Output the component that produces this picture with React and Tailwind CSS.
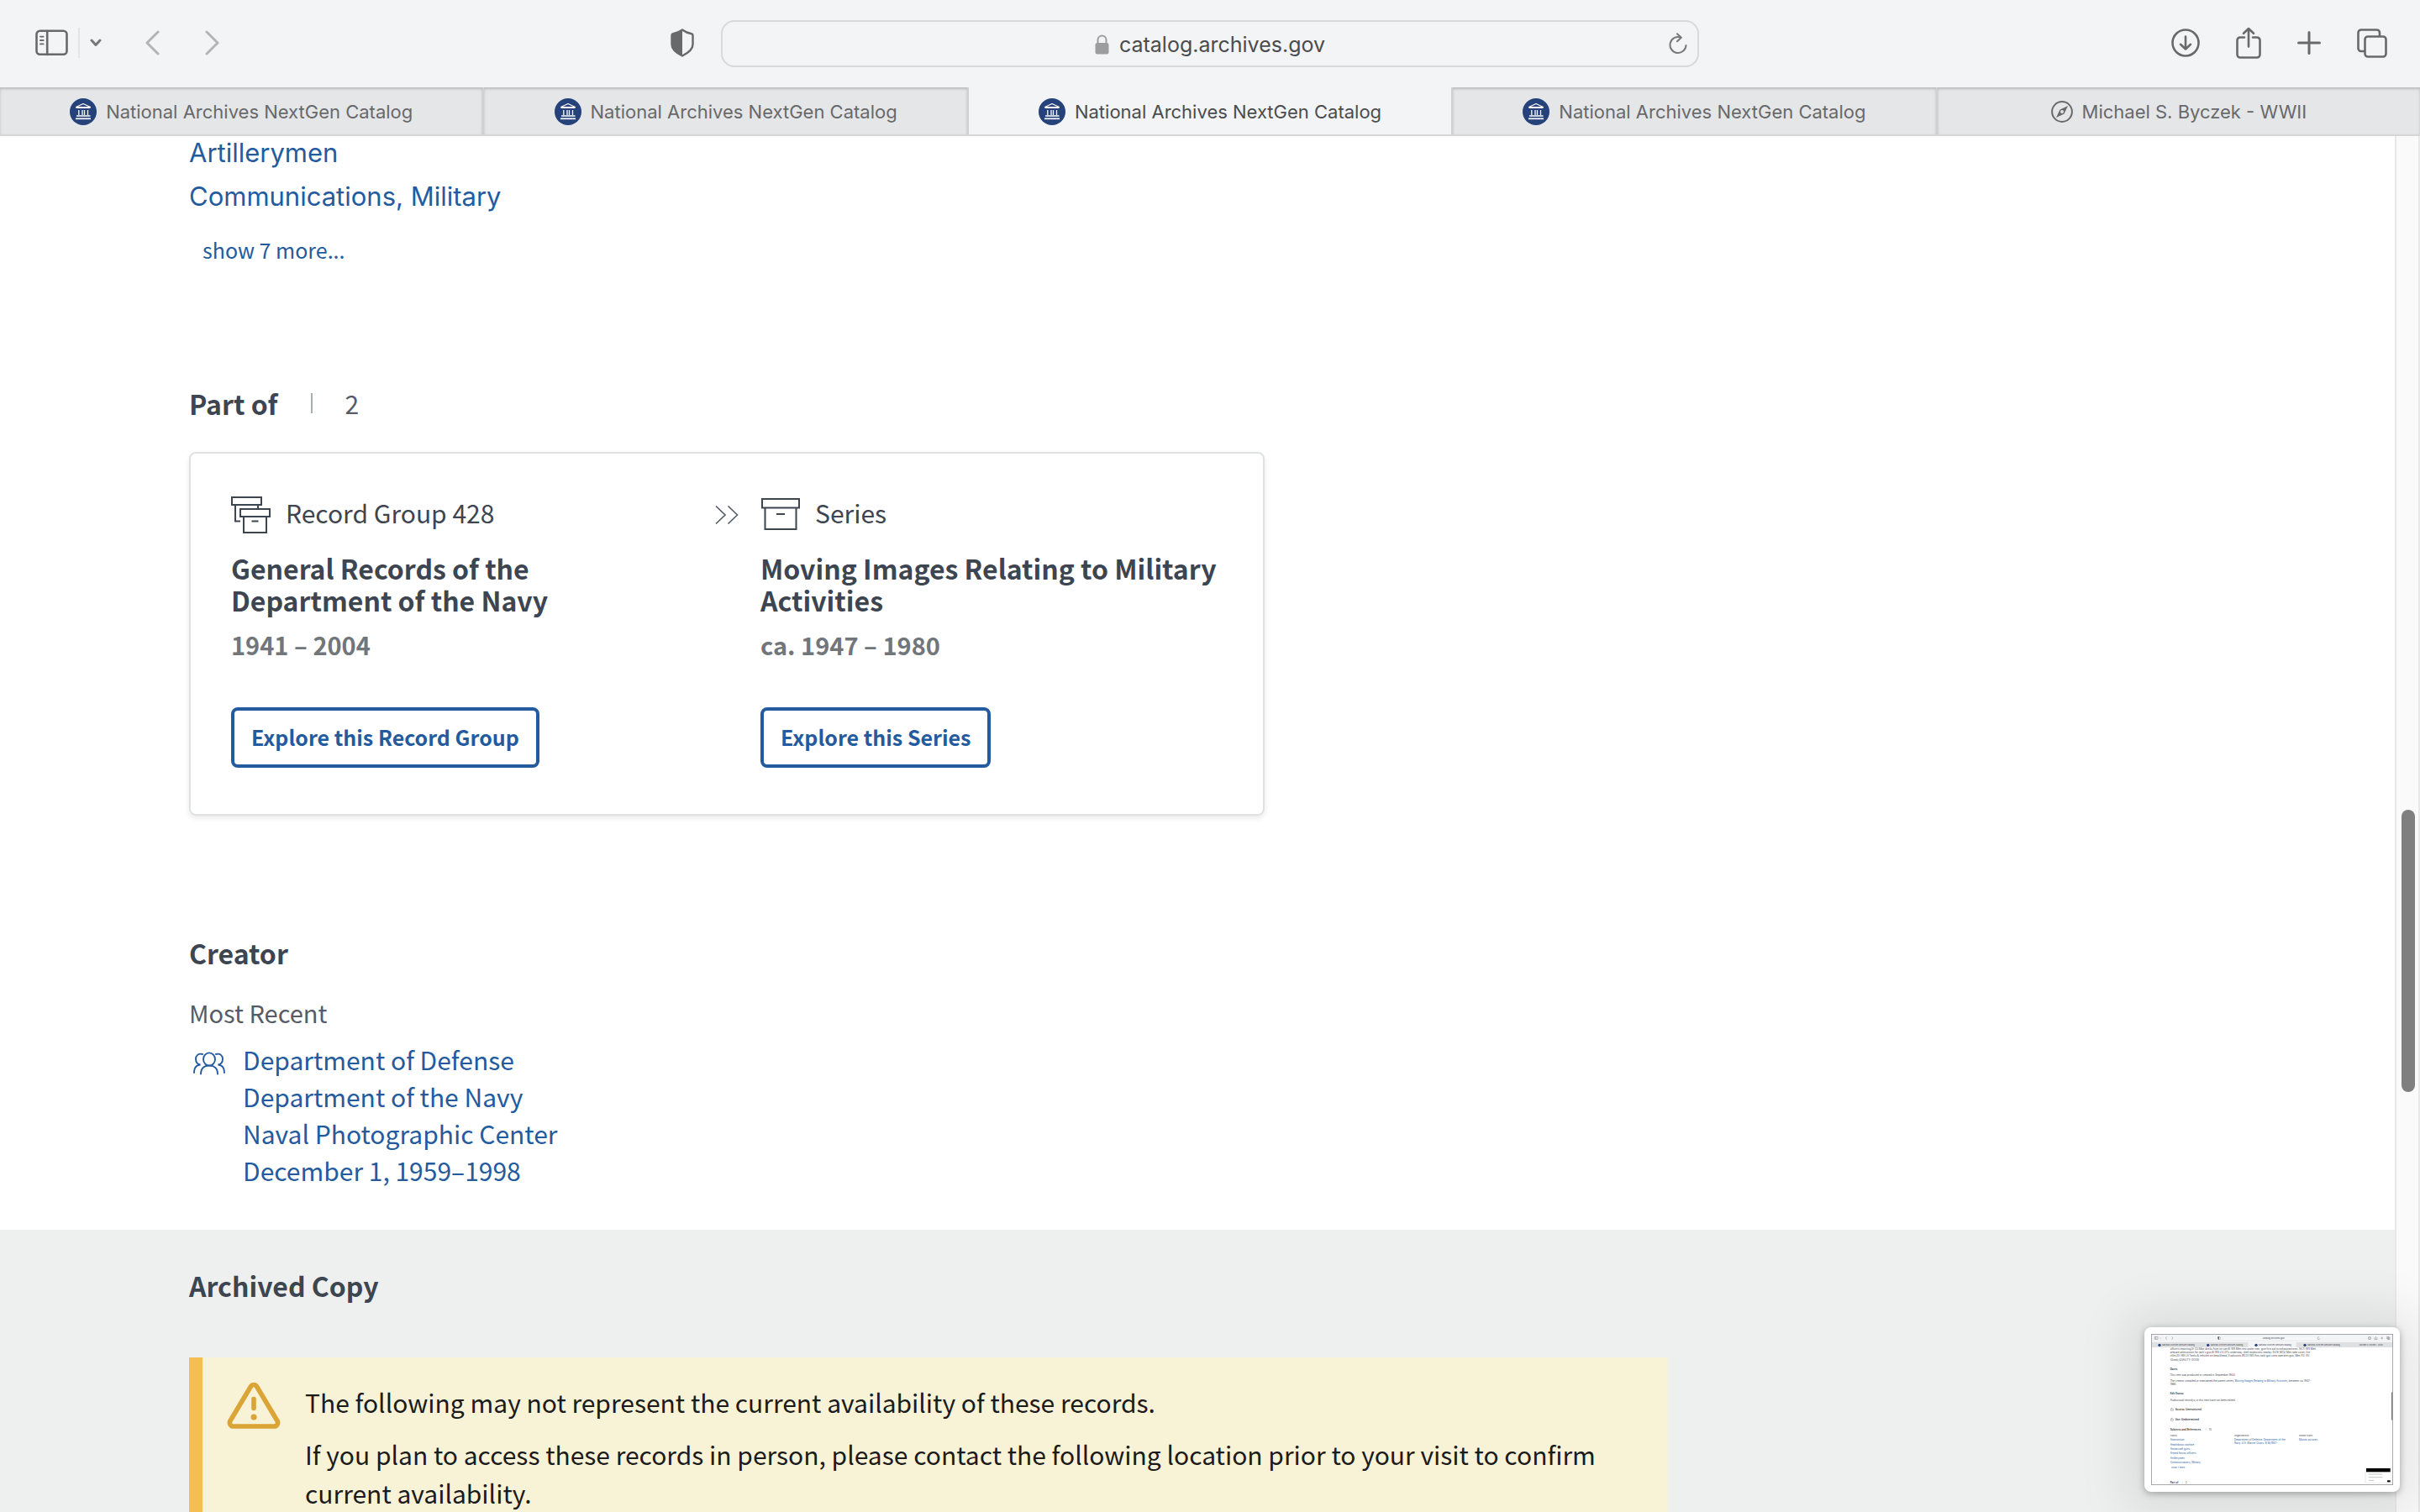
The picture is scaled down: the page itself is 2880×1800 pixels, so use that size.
import React from 'react';

const tabs = [
  { title: 'National Archives NextGen Catalog', icon: 'archives' },
  { title: 'National Archives NextGen Catalog', icon: 'archives' },
  { title: 'National Archives NextGen Catalog', icon: 'archives', active: true },
  { title: 'National Archives NextGen Catalog', icon: 'archives' },
  { title: 'Michael S. Byczek - WWII', icon: 'compass' },
];

const creatorLines = [
  'Department of Defense',
  'Department of the Navy',
  'Naval Photographic Center',
  'December 1, 1959–1998',
];

const SidebarIcon = () => (
  <svg className="w-[39px] h-8" viewBox="0 0 39 32" fill="none" stroke="#68696b" strokeWidth="2.6" strokeLinecap="round">
    <rect x="1.5" y="1.8" width="36" height="28" rx="4" />
    <path d="M14.2 2v28" />
    <path d="M6 8.6h3.6M6 13h3.6M6 17.4h3.6" strokeWidth="1.9" />
  </svg>
);

const ChevronIcon = ({ direction }) => (
  <svg className="w-[17px] h-[30px]" viewBox="0 0 17 30" fill="none" stroke="#b3b4b6" strokeWidth="3" strokeLinecap="round" strokeLinejoin="round">
    <path d={direction === 'left' ? 'M15 2 2 15l13 13' : 'M2 2l13 13L2 28'} />
  </svg>
);

const ShieldIcon = () => (
  <svg className="w-7 h-[34px]" viewBox="0 0 28 34" fill="none">
    <path d="M14 1.5C11 3.8 6.5 5.6 3 6.2c-1 .2-1.5.8-1.5 1.8v11c0 6 6.5 10.5 12.5 13.5z" fill="#68696b" />
    <path d="M14 1.5C17 3.8 21.5 5.6 25 6.2c1 .2 1.5.8 1.5 1.8v11c0 6-6.5 10.5-12.5 13.5C8 29.5 1.5 25 1.5 19V8c0-1 .5-1.6 1.5-1.8C6.5 5.6 11 3.8 14 1.5z" stroke="#68696b" strokeWidth="2.4" strokeLinejoin="round" />
  </svg>
);

const LockIcon = () => (
  <svg className="w-[17px] h-6" viewBox="0 0 17 24" fill="none">
    <path d="M3.5 11V6.5a5 5 0 0 1 10 0V11" stroke="#9c9d9f" strokeWidth="2" />
    <rect x="0.5" y="10" width="16" height="13.5" rx="2.5" fill="#9c9d9f" />
  </svg>
);

const ReloadIcon = () => (
  <svg className="w-[22px] h-[26px]" viewBox="0 0 22 26" fill="none" stroke="#77787a" strokeWidth="2" strokeLinecap="round" strokeLinejoin="round">
    <path d="M14 5.5A9.5 9.5 0 1 0 20.5 15" />
    <path d="M10 1.2l4.8 4.5-4.8 4.5" />
  </svg>
);

const DownloadIcon = () => (
  <svg className="w-[34px] h-[34px]" viewBox="0 0 34 34" fill="none" stroke="#68696b" strokeWidth="2.6" strokeLinecap="round" strokeLinejoin="round">
    <circle cx="17" cy="17" r="15.5" />
    <path d="M17 9.5v15M11 18.8l6 5.7 6-5.7" />
  </svg>
);

const ShareIcon = () => (
  <svg className="w-[30px] h-[38px]" viewBox="0 0 30 38" fill="none" stroke="#68696b" strokeWidth="2.6" strokeLinecap="round" strokeLinejoin="round">
    <path d="M10 12.5H5A3.500 3.500 0 0 0 1.500 16v17A3.500 3.500 0 0 0 5 36.500h20a3.500 3.500 0 0 0 3.500-3.500V16a3.500 3.500 0 0 0-3.500-3.500h-5" />
    <path d="M15 23.500V2M9 7.800l6-5.800 6 5.800" />
  </svg>
);

const PlusIcon = () => (
  <svg className="w-7 h-7" viewBox="0 0 28 28" fill="none" stroke="#68696b" strokeWidth="3" strokeLinecap="round">
    <path d="M14 1.5v25M1.5 14h25" />
  </svg>
);

const TabsIcon = () => (
  <svg className="w-9 h-[35px]" viewBox="0 0 36 35" fill="none" stroke="#68696b" strokeWidth="2.6" strokeLinejoin="round">
    <path d="M27 9V5a3.500 3.500 0 0 0-3.500-3.500H5A3.500 3.500 0 0 0 1.500 5v18.500A3.500 3.500 0 0 0 5 27h4" />
    <rect x="9.5" y="9.5" width="25" height="24" rx="3.5" />
  </svg>
);

const ArchivesFavicon = () => (
  <svg className="w-8 h-8" viewBox="0 0 32 32" fill="none" stroke="#fff">
    <circle cx="16" cy="16" r="16" fill="#25427a" stroke="none" />
    <path d="M7.5 10.5 16 6.5l8.5 4z" strokeWidth="1.2" strokeLinejoin="round" />
    <path d="M7.5 11.3h17M10.8 14v6M15 14v6M17.5 14v6M21.5 14v6M8 21h16.5" strokeWidth="1.3" />
    <path d="M7 24.3h18" strokeWidth="1.7" />
  </svg>
);

const CompassIcon = () => (
  <svg className="w-[26px] h-[26px]" viewBox="0 0 26 26" fill="none">
    <circle cx="13" cy="13" r="11.9" stroke="#68696b" strokeWidth="2" />
    <path fillRule="evenodd" d="M20 6l-4.5 9.5L6 20l4.5-9.5zM13 11a2 2 0 1 0 0 4 2 2 0 0 0 0-4z" fill="#68696b" />
  </svg>
);

const RecordGroupIcon = () => (
  <svg className="w-[47px] h-11" viewBox="0 0 47 44" fill="none" stroke="#3d4551" strokeWidth="2">
    <rect x="1" y="1" width="35" height="9" />
    <path d="M5 10v19.5h6M32 10v5" />
    <rect x="11" y="15" width="35" height="9" />
    <path d="M15 24v19h27V24M24.5 29.5h8" />
  </svg>
);

const SeriesIcon = () => (
  <svg className="w-[47px] h-11" viewBox="0 0 47 44" fill="none" stroke="#3d4551" strokeWidth="2">
    <rect x="2" y="3" width="44" height="10.5" />
    <path d="M5.5 13.5V39h37V13.5M19 21h10" />
  </svg>
);

const DoubleChevron = () => (
  <svg className="w-7 h-[22px]" viewBox="0 0 28 22" fill="none" stroke="#565c65" strokeWidth="1.6">
    <path d="M1 .5 12 11 1 21.5M15.5.5l11 10.5-11 10.5" />
  </svg>
);

const PeopleIcon = () => (
  <svg className="w-[38px] h-7" viewBox="0 0 38 28" fill="none" stroke="#245b9e" strokeWidth="1.9" strokeLinecap="round">
    <ellipse cx="19" cy="9" rx="7" ry="7.6" />
    <path d="M9 26.5c0-6 3.5-10 10-10s10 4 10 10" />
    <path d="M11 3C6 1.5 3 5 3 8.5S5 15 8.5 15.5C3.5 16 1 20 1 25" />
    <path d="M27 3c5-1.5 8 2 8 5.500S33 15 29.500 15.500C34.500 16 37 20 37 25" />
  </svg>
);

const WarningIcon = () => (
  <svg className="w-16 h-14" viewBox="0 0 64 56" fill="none" stroke="#dba437" strokeWidth="5.6" strokeLinecap="round" strokeLinejoin="round">
    <path d="M28.5 4.500 4 45.500c-1.600 2.800.3 6.500 3.700 6.500h48.600c3.400 0 5.300-3.700 3.700-6.500L35.500 4.500c-1.600-2.700-5.400-2.700-7 0z" />
    <path d="M32 19.500v11" />
    <path d="M32 41h.1" strokeWidth="7" />
  </svg>
);

const Toolbar = () => (
  <div className="grid h-[104px] grid-cols-[1fr_1164px_1fr] bg-[#f3f4f6]">
    <div className="flex items-center pb-0.5 pl-[42px] pr-8">
      <button aria-label="Show sidebar"><SidebarIcon /></button>
      <div className="ml-3 h-9 w-0.5 bg-[#e3e4e6]" />
      <button aria-label="Tab groups" className="ml-3">
        <svg className="w-[14px] h-[10px]" viewBox="0 0 14 10" fill="none" stroke="#77787a" strokeWidth="3" strokeLinecap="round" strokeLinejoin="round">
          <path d="M2 2l5 5.5L12 2" />
        </svg>
      </button>
      <button aria-label="Back" className="ml-[52px]"><ChevronIcon direction="left" /></button>
      <button aria-label="Forward" className="ml-[54px]"><ChevronIcon direction="right" /></button>
      <button aria-label="Privacy report" className="ml-auto"><ShieldIcon /></button>
    </div>
    <div className="flex items-center">
      <div className="flex h-14 w-full items-center rounded-2xl border-2 border-[#d8d9db] px-3">
        <div className="w-[22px]" />
        <div className="flex flex-1 items-center justify-center gap-3 pt-0.5">
          <LockIcon />
          <input
            aria-label="Address"
            className="field-sizing-content bg-transparent text-[25px] leading-9 text-[#4b4c4e] outline-none"
            defaultValue="catalog.archives.gov"
          />
        </div>
        <button aria-label="Reload"><ReloadIcon /></button>
      </div>
    </div>
    <div className="flex items-center justify-end gap-[43px] pb-0.5 pr-[39px]">
      <button aria-label="Downloads"><DownloadIcon /></button>
      <button aria-label="Share"><ShareIcon /></button>
      <button aria-label="New tab"><PlusIcon /></button>
      <button aria-label="Tab overview"><TabsIcon /></button>
    </div>
  </div>
);

const TabBar = () => (
  <div className="flex h-[58px] border-b-2 border-[#d6d7d9] bg-[#f3f4f6]">
    {tabs.map((tab, index) => (
      <button
        key={index}
        className={
          tab.active
            ? 'flex flex-1 items-center justify-center gap-[11px] border-r-2 border-[#cfd0d2] pt-0.5 text-[22px] text-[#4b4c4e]'
            : 'flex flex-1 items-center justify-center gap-[11px] border-r-2 border-[#cfd0d2] bg-[#e5e6e8] pt-0.5 text-[22px] text-[#68696b] shadow-[inset_0_2px_3px_#b9babc] last:border-r-0'
        }
      >
        {tab.icon === 'archives' ? <ArchivesFavicon /> : <CompassIcon />}
        {tab.title}
      </button>
    ))}
  </div>
);

const PartCard = ({ icon, kind, title, dates, action, className }) => (
  <div className={className}>
    <div className="flex h-11 items-center gap-[18px] text-[30px] text-[#3d4551]">
      {icon}
      <span className="pb-1.5">{kind}</span>
    </div>
    <h3 className="mt-[22px] text-[32px] leading-[38px] font-bold text-[#3d4551]">{title}</h3>
    <p className="mt-3 text-[29px] leading-[44px] font-bold text-[#71767a]">{dates}</p>
    <button className="mt-[53px] h-[72px] rounded-lg border-4 border-[#245b9e] px-5 text-[25px] font-bold text-[#245b9e]">
      {action}
    </button>
  </div>
);

const PartOfSection = () => (
  <section className="mt-[143px]">
    <div className="flex items-center text-[32px] leading-10">
      <h2 className="font-bold text-[#3d4551]">Part of</h2>
      <div className="ml-10 h-6 w-0.5 bg-[#a9aeb1]" />
      <span className="ml-[38px] text-[30px] text-[#565c65]">2</span>
    </div>
    <div className="mt-[38px] grid max-w-[1280px] grid-cols-[1fr_auto_1fr] gap-[26px] rounded-lg border-2 border-[#dfe1e2] px-12 pt-[51px] pb-[55px] shadow-[0_3px_6px_rgba(0,0,0,0.09)]">
      <PartCard
        className="pr-20"
        icon={<RecordGroupIcon />}
        kind="Record Group 428"
        title="General Records of the Department of the Navy"
        dates="1941 – 2004"
        action="Explore this Record Group"
      />
      <div className="flex h-11 items-center">
        <DoubleChevron />
      </div>
      <PartCard
        icon={<SeriesIcon />}
        kind="Series"
        title="Moving Images Relating to Military Activities"
        dates="ca. 1947 – 1980"
        action="Explore this Series"
      />
    </div>
  </section>
);

const CreatorSection = () => (
  <section className="mt-[143px]">
    <h2 className="text-[32px] leading-10 font-bold text-[#3d4551]">Creator</h2>
    <h3 className="mt-[29px] text-[29px] leading-[44px] text-[#565c65]">Most Recent</h3>
    <div className="mt-3 flex gap-[21px] pl-[5px]">
      <div className="flex h-[54px] items-center">
        <PeopleIcon />
      </div>
      <a href="#creator" className="text-[30px] leading-[44px] text-[#245b9e]">
        {creatorLines.map((line) => (
          <span key={line} className="block">{line}</span>
        ))}
      </a>
    </div>
  </section>
);

const ArchivedCopy = () => (
  <section className="mt-[49px] flex flex-1 flex-col bg-[#eef0f0] pt-[46px] pl-[225px]">
    <h2 className="text-[32px] leading-10 font-bold text-[#3d4551]">Archived Copy</h2>
    <div className="mt-[66px] flex max-w-[1760px] flex-1 gap-[29px] border-l-[16px] border-[#f4bf51] bg-[#f8f2d6] pt-[30px] pl-[29px] pr-12">
      <div className="shrink-0">
        <WarningIcon />
      </div>
      <div className="text-[30px] leading-[46px] text-[#1b1b1b]">
        <p>The following may not represent the current availability of these records.</p>
        <p className="mt-4">
          If you plan to access these records in person, please contact the following location prior to your visit to confirm current availability.
        </p>
      </div>
    </div>
  </section>
);

// miniature of the last screen capture, floating in the corner
const thumbLinks = ['Ammunition', 'Amphibious warfare', 'Antiaircraft guns', 'Armed forces officers', 'Artillerymen', 'Communications, Military'];

const CaptureThumbnail = () => (
  <div className="absolute right-6 bottom-6 rounded-lg bg-white p-2 shadow-[0_4px_60px_24px_rgba(0,0,0,0.08),0_2px_8px_rgba(0,0,0,0.3)]">
    <svg className="h-[180px] w-72" viewBox="0 0 864 540" fontFamily="Inter, sans-serif" fontSize="9" fill="#3d4551">
      <rect width="864" height="540" fill="#fff" />
      <rect width="864" height="30" fill="#f3f4f6" />
      <rect y="30" width="864" height="18" fill="#dfe0e2" />
      <rect x="346" y="30" width="172" height="18" fill="#f3f4f6" />
      <rect x="256" y="8" width="352" height="15" rx="4" fill="#f6f7f8" stroke="#dcdde0" />
      <g fill="none" stroke="#77787a" strokeWidth="1.5">
        <rect x="13" y="10" width="11" height="9" rx="1" />
        <path d="M17 10v9M32 14l2 2 2-2M56 10l-4 5 4 5M74 10l4 5-4 5M600 12a4 4 0 1 0 2 4" />
        <circle cx="780" cy="15" r="5" />
        <path d="M780 12v6M798 13v7h9v-7M802 9v8M820 15h8M824 11v8M842 10h7v7h-7zM845 13h7v7h-7z" />
      </g>
      <path d="M243 10h-5v7l5 4z" fill="#68696b" />
      <circle cx="243" cy="15" r="5" fill="none" stroke="#68696b" />
      <text x="398" y="19" fontSize="8">catalog.archives.gov</text>
      {[30, 203, 375, 549].map((x) => (
        <g key={x}>
          <circle cx={x} cy="40" r="5" fill="#25427a" />
          <text x={x + 9} y="43" fontSize="7">National Archives NextGen Catalog</text>
        </g>
      ))}
      <text x="743" y="43" fontSize="7">Michael S. Byczek - WWII</text>
      <text x="68" y="56">officers reporting.5) CU Man drinks from tin can.6) WS Men rest under tree, give first aid to exhausted men. SV.7) WS Men</text>
      <text x="68" y="69">prepare ammunition for tank&apos;s gun.8) WS LS LVTs underway: shell explosions nearby. SV.9) MCU Men take cover, fire</text>
      <text x="68" y="82">rifles.10) WS LS Tanks &amp; vehicles on beachhead, Explosions BG.11) WS Anti-tank gun crew operates gun, Men FG. SV</text>
      <text x="68" y="95">(Good) QUALITY: GOOD</text>
      <text x="68" y="128" fontWeight="700">Dates</text>
      <text x="68" y="151">This item was produced or created in September 1944.</text>
      <text x="68" y="170">
        The creator compiled or maintained the parent series, <tspan fill="#2560a0">Moving Images Relating to Military Activities</tspan>, between ca. 1947–
      </text>
      <text x="68" y="183">1980.</text>
      <text x="68" y="217" fontWeight="700">Edit Status</text>
      <text x="68" y="240">Audiovisual record(s) in this item have not been edited.</text>
      <path d="M70 268h9v6h-9zM72 268v-3h4M70 304h9v6h-9zM72 304v-3h4" fill="none" stroke="#3d4551" />
      <text x="86" y="273" fontWeight="700">Access: Unrestricted</text>
      <text x="86" y="309" fontWeight="700">Use: Undetermined</text>
      <text x="68" y="345" fontWeight="700">Subjects and References</text>
      <path d="M195 336v8M112 528v8" stroke="#a9aeb1" />
      <text x="206" y="345">15</text>
      <text x="68" y="367" fontSize="8">Topics</text>
      <text x="297" y="367" fontSize="8">Organizations</text>
      <text x="528" y="367" fontSize="8">Media Types</text>
      <g fill="#2560a0">
        {thumbLinks.map((link, i) => (
          <text key={link} x="68" y={382 + i * 16}>{link}</text>
        ))}
        <text x="297" y="382">Department of Defense. Department of the</text>
        <text x="297" y="394">Navy. U.S. Marine Corps. 9/18/1947-</text>
        <text x="528" y="382">Motion pictures</text>
        <text x="72" y="480" fontSize="8">show 7 more...</text>
      </g>
      <text x="68" y="535" fontWeight="700">Part of</text>
      <text x="122" y="535">2</text>
      <path d="M857 48v492" stroke="#e4e5e7" />
      <rect x="858" y="208" width="4" height="100" rx="2" fill="#77787a" />
      <rect x="762" y="476" width="96" height="58" rx="3" fill="#f1f2f2" />
      <rect x="768" y="480" width="86" height="50" fill="#fff" />
      <rect x="768" y="480" width="86" height="13" fill="#000" />
      <path d="M776 501h50M776 512h50M776 523h20" stroke="#c4c6c8" strokeWidth="3" />
      <rect x="843" y="523" width="11" height="6" fill="#000" />
      <rect x="1" y="1" width="862" height="538" fill="none" stroke="#98999b" strokeWidth="3" />
    </svg>
  </div>
);

const ScrollBar = () => (
  <div className="w-[30px] shrink-0 border-r-2 border-l-2 border-[#e8e8e8] bg-[#fafafa] px-[6px]">
    <div className="mt-[802px] h-[336px] w-4 rounded-full bg-[#7f7f7f]" />
  </div>
);

const App = () => (
  <div className="relative flex h-screen flex-col overflow-hidden bg-white font-['Noto_Sans_CJK_SC',sans-serif]">
    <header className="shrink-0 font-[Inter,sans-serif]">
      <Toolbar />
      <TabBar />
    </header>
    <div className="flex min-h-0 flex-1">
      <main className="flex flex-1 flex-col overflow-hidden">
        <div className="shrink-0 pl-[225px]">
          <ul className="flex flex-col gap-4 pt-0.5 font-[Inter,sans-serif] text-[31px] leading-9 text-[#245b9e]">
            <li><a href="#artillerymen">Artillerymen</a></li>
            <li><a href="#communications">Communications, Military</a></li>
          </ul>
          <button className="mt-[25px] ml-4 block text-[25px] leading-10 text-[#245b9e]">show 7 more...</button>
          <PartOfSection />
          <CreatorSection />
        </div>
        <ArchivedCopy />
      </main>
      <ScrollBar />
    </div>
    <CaptureThumbnail />
  </div>
);

export default App;
